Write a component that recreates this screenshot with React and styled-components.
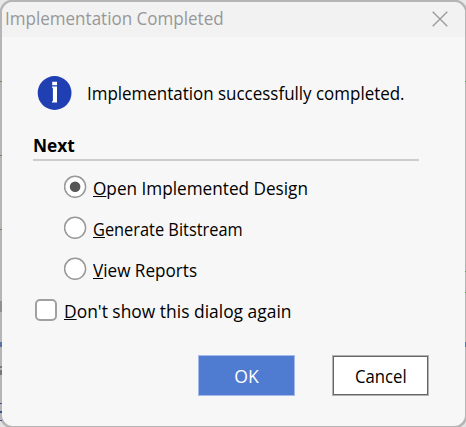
import React, { useState } from "react";
import styled, { createGlobalStyle } from "styled-components";

const GlobalStyle = createGlobalStyle`
  * { box-sizing: border-box; }
  body {
    margin: 0;
    overflow: hidden;
    font-family: "Open Sans", "Noto Sans", sans-serif;
    font-size: 18px;
    color: #000;
  }
`;

/* Sliver of the application window that shows around the dialog. */
const Desktop = styled.div`
  width: 466px;
  height: 427px;
  padding: 2px 1px 1px 2px;
  background:
    linear-gradient(#5f8f56, #5f8f56) 0 81px / 100% 1px no-repeat,
    linear-gradient(#5f8f56, #5f8f56) 0 155px / 2px 1px no-repeat,
    linear-gradient(#5f8f56, #5f8f56) 0 229px / 2px 1px no-repeat,
    linear-gradient(#5f8f56, #5f8f56) 465px 271px / 1px 1px no-repeat,
    linear-gradient(#5f8f56, #5f8f56) 465px 292px / 1px 1px no-repeat,
    linear-gradient(#8f8f8f, #8f8f8f) 0 301px / 2px 11px no-repeat,
    linear-gradient(#5575a8, #5575a8) 0 342px / 100% 5px no-repeat,
    linear-gradient(#77777a, #77777a) 0 366px / 2px 2px no-repeat,
    linear-gradient(#77777a, #77777a) 0 370px / 2px 5px no-repeat,
    linear-gradient(#3c5289, #3c5289) 0 403px / 2px 1px no-repeat,
    linear-gradient(#3c5289, #3c5289) 0 411px / 2px 2px no-repeat,
    linear-gradient(#3c5289, #3c5289) 0 420px / 2px 1px no-repeat,
    radial-gradient(circle at 13px 13px, transparent 13px, #e8e8e8 14px) 0 0 / 12px 12px no-repeat,
    radial-gradient(circle at 0 13px, transparent 13px, #e8e8e8 14px) 100% 0 / 12px 12px no-repeat,
    radial-gradient(circle at 13px 0, transparent 13px, #e2e2e2 14px) 0 100% / 12px 12px no-repeat,
    radial-gradient(circle at 0 0, transparent 13px, #e2e2e2 14px) 100% 100% / 12px 12px no-repeat,
    #b5b5b5;
`;

const Dialog = styled.section`
  display: flex;
  flex-direction: column;
  width: 463px;
  height: 424px;
  background: #f7f7f7;
  border-radius: 11px;
  overflow: hidden;
`;

const TitleBar = styled.header`
  display: flex;
  align-items: center;
  justify-content: space-between;
  height: 35px;
  padding: 0 17px 3px 3px;
  background: #f2f2f2;
  color: #989898;
`;

const Text = styled.span`
  display: inline-block;
  line-height: 24px;
  white-space: nowrap;
  transform: scaleX(${(p) => p.$stretch || 0.95});
  transform-origin: ${(p) => (p.$centered ? "center" : "left")};
`;

const CloseButton = styled.button`
  display: flex;
  padding: 1px 0 0;
  border: 0;
  background: none;
  color: #989898;
`;

const Body = styled.main`
  display: flex;
  flex-direction: column;
  padding: 38px 36px 0 31px;
`;

const Message = styled.div`
  display: flex;
  align-items: center;
  gap: 15px;
  height: 36px;
  padding-left: 4px;
`;

const SectionTitle = styled.h2`
  height: 28px;
  margin: 22px 10px 0 0;
  border-bottom: 2px solid #cdcdcd;
  font-size: 18px;
  line-height: 24px;
`;

const Options = styled.div`
  display: flex;
  flex-direction: column;
  padding: 5px 0 0 31px;
`;

const Option = styled.label`
  display: flex;
  align-items: center;
  gap: ${(p) => p.$gap || 6}px;
  height: 41px;
`;

const OptionText = styled.span`
  padding-top: 2px;
  height: 26px;
`;

const Mnemonic = styled.span`
  text-decoration: underline 1px;
  text-underline-offset: 1px;
  text-decoration-skip-ink: none;
`;

const RadioIcon = styled.svg`
  flex: none;
  width: 23px;
  height: 23px;
`;

const HiddenInput = styled.input`
  appearance: none;
  width: 0;
  height: 0;
  margin: 0 -6px 0 0;
`;

const Checkbox = styled.input`
  appearance: none;
  width: 22px;
  height: 22px;
  margin: 0 0 0 -1px;
  border: 2px solid #a0a0a0;
  border-radius: 5px;
  background: #fff;
  &:checked { background: #555; }
`;

const Remember = styled.div`
  padding-left: 3px;
`;

const Actions = styled.footer`
  display: flex;
  justify-content: flex-end;
  gap: 37px;
  margin-top: 25px;
`;

const ActionButton = styled.button`
  display: flex;
  align-items: center;
  justify-content: center;
  width: 97px;
  height: 41px;
  padding: 1px 0 0;
  border: 1px solid ${(p) => (p.$primary ? "#a4baea" : "#b3b3b3")};
  box-shadow: inset 0 0 0 1px ${(p) => (p.$primary ? "#4f7bd1" : "#656565")};
  background: ${(p) => (p.$primary ? "#4f7bd1" : "#fff")};
  color: ${(p) => (p.$primary ? "#fff" : "#000")};
  font: inherit;
`;

const InfoIcon = () => (
  <svg width="35" height="35" viewBox="0 0 35 35">
    <circle cx="17.6" cy="17" r="16.9" fill="#1f3fb3" />
    <path d="M15.2 5.7H20v3.5h-4.8zM15 10.6h5v15.8h-5v-1.1h.9V11.7H15z" fill="#fff" />
  </svg>
);

const CloseIcon = () => (
  <svg width="16" height="16" viewBox="0 0 16 16" fill="none" stroke="currentColor" strokeWidth="1.3">
    <path d="M.7.7l14.6 14.6M15.3.7L.7 15.3" />
  </svg>
);

const choices = [
  { label: "Open Implemented Design", stretch: 0.954 },
  { label: "Generate Bitstream", stretch: 0.909 },
  { label: "View Reports", stretch: 0.951 },
];

function Radio({ checked, onChange }) {
  return (
    <>
      <HiddenInput type="radio" name="next" checked={checked} onChange={onChange} />
      <RadioIcon viewBox="0 0 23 23">
        <circle cx="11.1" cy="11.8" r="10.5" fill="#fff" stroke="#999" strokeWidth="1.5" />
        {checked && <circle cx="11.1" cy="11.8" r="5.3" fill="#555" />}
      </RadioIcon>
    </>
  );
}

function Label({ children, stretch }) {
  return (
    <OptionText>
      <Text $stretch={stretch}>
        <Mnemonic>{children[0]}</Mnemonic>
        {children.slice(1)}
      </Text>
    </OptionText>
  );
}

export default function App() {
  const [selected, setSelected] = useState(0);
  return (
    <Desktop>
      <GlobalStyle />
      <Dialog role="dialog">
        <TitleBar>
          <Text $stretch={0.946}>Implementation Completed</Text>
          <CloseButton aria-label="Close"><CloseIcon /></CloseButton>
        </TitleBar>
        <Body>
          <Message>
            <InfoIcon />
            <Text $stretch={0.942}>Implementation successfully completed.</Text>
          </Message>
          <SectionTitle><Text $stretch={0.96}>Next</Text></SectionTitle>
          <Options>
            {choices.map((c, i) => (
              <Option key={c.label}>
                <Radio checked={selected === i} onChange={() => setSelected(i)} />
                <Label stretch={c.stretch}>{c.label}</Label>
              </Option>
            ))}
          </Options>
          <Remember>
            <Option $gap={7}>
              <Checkbox type="checkbox" />
              <Label stretch={0.968}>Don't show this dialog again</Label>
            </Option>
          </Remember>
          <Actions>
            <ActionButton $primary><Text $centered $stretch={0.98}>OK</Text></ActionButton>
            <ActionButton><Text $centered $stretch={0.93}>Cancel</Text></ActionButton>
          </Actions>
        </Body>
      </Dialog>
    </Desktop>
  );
}
